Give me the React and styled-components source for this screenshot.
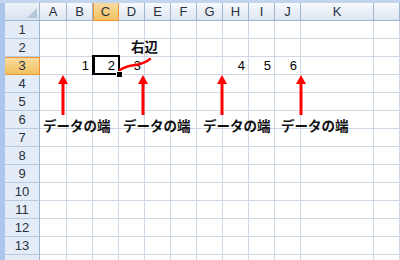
import React from "react";
import styled, { createGlobalStyle, css } from "styled-components";

const Global = createGlobalStyle`
  html, body { margin: 0; padding: 0; background: #fff; }
  body { width: 400px; height: 260px; overflow: hidden; }
`;

const Page = styled.div`
  position: relative;
  width: 400px;
  height: 260px;
  overflow: hidden;
  display: flex;
  flex-direction: column;
  font-family: "Liberation Sans", Arial, sans-serif;
`;

const TopStrip = styled.div`
  height: 3px;
  flex: none;
  background: #c3d5ec;
`;

const Body = styled.div`
  display: flex;
  flex: 1;
`;

const LeftStrip = styled.div`
  width: 5px;
  flex: none;
  background: #abc6ea;
`;

const Grid = styled.div`
  display: grid;
  grid-template-columns: 35px 27px repeat(9, 26px) 73px 1fr;
  grid-auto-rows: 18px;
  flex: 1;
`;

const Corner = styled.div`
  position: relative;
  box-sizing: border-box;
  background: linear-gradient(#eef3f9, #d9e3ef);
  border-right: 1px solid #9eb6ce;
  border-bottom: 1px solid #9eb6ce;
  &::after {
    content: "";
    position: absolute;
    right: 2px;
    bottom: 2px;
    border-left: 10px solid transparent;
    border-bottom: 10px solid #b4c6da;
  }
`;

const ColHead = styled.div`
  box-sizing: border-box;
  display: flex;
  align-items: center;
  justify-content: center;
  font-size: 13px;
  color: #27313d;
  background: linear-gradient(#f6f9fc, #dde6f1);
  border-right: 1px solid #9eb6ce;
  border-bottom: 1px solid #9eb6ce;
  ${(p) =>
    p.$active &&
    css`
      background: linear-gradient(#f9dca4, #f1c15f);
      border-right-color: #f29536;
      border-bottom: 1px solid #f29536;
      box-shadow: inset 1px 0 0 #f29536;
    `}
`;

const RowHead = styled.div`
  box-sizing: border-box;
  display: flex;
  align-items: center;
  justify-content: center;
  font-size: 13px;
  color: #27313d;
  background: #e4ecf7;
  border-right: 1px solid #9eb6ce;
  border-bottom: 1px solid #b9cbe0;
  ${(p) =>
    p.$active &&
    css`
      background: linear-gradient(#f9dca4, #f1c15f);
      border-right-color: #f29536;
      border-bottom-color: #f29536;
      box-shadow: inset 0 1px 0 #f29536;
    `}
`;

const Cell = styled.div`
  box-sizing: border-box;
  display: flex;
  align-items: center;
  justify-content: flex-end;
  padding-right: 3px;
  font-size: 13px;
  color: #000;
  background: #fff;
  border-right: 1px solid #d0d7e5;
  border-bottom: 1px solid #d0d7e5;
`;

const ActiveBox = styled.div`
  position: absolute;
  left: 92px;
  top: 55px;
  width: 28px;
  height: 20px;
  box-sizing: border-box;
  border: 2px solid #000;
  border-left-width: 3px;
`;

const FillHandle = styled.div`
  position: absolute;
  left: 117px;
  top: 72px;
  width: 5px;
  height: 5px;
  background: #000;
  box-shadow: 0 0 0 1px #fff;
`;

const Note = styled.div`
  position: absolute;
  left: ${(p) => p.$x}px;
  top: ${(p) => p.$y}px;
  font-family: "Noto Sans CJK JP", "Liberation Sans", sans-serif;
  font-weight: bold;
  font-size: 13.5px;
  line-height: 1;
  color: #111;
  white-space: nowrap;
`;

const ArrowSvg = styled.svg`
  position: absolute;
  left: ${(p) => p.$x - 6}px;
  top: 75px;
`;

const CurveSvg = styled.svg`
  position: absolute;
  left: 0;
  top: 0;
`;

const cols = ["A", "B", "C", "D", "E", "F", "G", "H", "I", "J", "K", ""];
const values = { 3: { B: "1", C: "2", D: "3", H: "4", I: "5", J: "6" } };

function Arrow({ x }) {
  return (
    <ArrowSvg $x={x} width="12" height="40" viewBox="0 0 12 40">
      <rect x="4.5" y="7" width="3" height="33" fill="#f00" />
      <polygon points="6,0 1,9 11,9" fill="#f00" />
    </ArrowSvg>
  );
}

export default function App() {
  const rows = Array.from({ length: 14 }, (_, i) => i + 1);
  return (
    <Page>
      <Global />
      <TopStrip />
      <Body>
        <LeftStrip />
        <Grid>
          <Corner />
          {cols.map((c, i) => (
            <ColHead key={i} $active={c === "C"}>
              {c}
            </ColHead>
          ))}
          {rows.map((r) => (
            <React.Fragment key={r}>
              <RowHead $active={r === 3}>{r <= 13 ? r : ""}</RowHead>
              {cols.map((c, i) => (
                <Cell key={i}>{(values[r] && values[r][c]) || ""}</Cell>
              ))}
            </React.Fragment>
          ))}
        </Grid>
      </Body>
      <ActiveBox />
      <FillHandle />
      <CurveSvg width="400" height="260">
        <path
          d="M120 70 C 127 65, 133 66, 140 64 S 147 61, 150 59"
          stroke="#f00"
          strokeWidth="2.5"
          fill="none"
          strokeLinecap="round"
        />
      </CurveSvg>
      <Note $x={131} $y={40}>右辺</Note>
      <Arrow x={63} />
      <Arrow x={143} />
      <Arrow x={222} />
      <Arrow x={301} />
      <Note $x={43} $y={119}>データの端</Note>
      <Note $x={123} $y={119}>データの端</Note>
      <Note $x={203} $y={119}>データの端</Note>
      <Note $x={281} $y={119}>データの端</Note>
    </Page>
  );
}
